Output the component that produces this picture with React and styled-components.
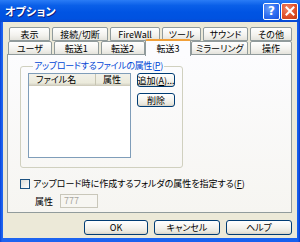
import React from "react";
import styled, { createGlobalStyle } from "styled-components";

const GlobalStyle = createGlobalStyle`
  html, body {
    margin: 0;
    padding: 0;
    background: #ffffff;
  }
  body {
    font-family: "Noto Sans CJK JP", "Noto Sans", sans-serif;
    font-size: 9px;
    font-feature-settings: "palt";
    color: #000;
  }
  * { box-sizing: border-box; }
`;

const topTabs = [
  { label: "表示", width: 41 },
  { label: "接続/切断", width: 56 },
  { label: "FireWall", width: 50 },
  { label: "ツール", width: 39 },
  { label: "サウンド", width: 45 },
  { label: "その他", width: 42 },
];

const frontTabs = [
  { label: "ユーザ", width: 44 },
  { label: "転送1", width: 45 },
  { label: "転送2", width: 44 },
  { label: "転送3", width: 47, active: true },
  { label: "ミラーリング", width: 57 },
  { label: "操作", width: 42 },
];

export default function App() {
  return (
    <>
      <GlobalStyle />
      <Window>
        <TitleBar>
          <Title>オプション</Title>
          <Caption>
            <CaptionButton>
              <HelpGlyph>?</HelpGlyph>
            </CaptionButton>
            <CaptionButton $close>
              <svg width="10" height="10" viewBox="0 0 10 10">
                <path d="M1.5 1.5 L8.5 8.5 M8.5 1.5 L1.5 8.5" stroke="#fff" strokeWidth="2" strokeLinecap="square" />
              </svg>
            </CaptionButton>
          </Caption>
        </TitleBar>

        <Body>
          <TabStrip>
            <TabRow $back>
              {topTabs.map((t) => (
                <Tab key={t.label} $width={t.width}>{t.label}</Tab>
              ))}
            </TabRow>
            <TabRow>
              {frontTabs.map((t) => (
                <Tab key={t.label} $width={t.width} $active={t.active}>{t.label}</Tab>
              ))}
            </TabRow>
          </TabStrip>

          <Panel>
            <Group>
              <Legend>アップロードするファイルの属性(<u>P</u>)</Legend>
              <GroupInner>
                <ListView>
                  <ListHeader>
                    <HeaderCell $width={67}>ファイル名</HeaderCell>
                    <HeaderCell $width={34}>属性</HeaderCell>
                  </ListHeader>
                </ListView>
                <SideButtons>
                  <Button $width={38} $height={14}>追加(<u>A</u>)...</Button>
                  <Button $width={38} $height={14}>削除</Button>
                </SideButtons>
              </GroupInner>
            </Group>

            <CheckRow>
              <CheckBox />
              <span>アップロード時に作成するフォルダの属性を指定する(<u>F</u>)</span>
            </CheckRow>

            <AttrRow>
              <span>属性</span>
              <DisabledInput>777</DisabledInput>
            </AttrRow>
          </Panel>

          <Footer>
            <Button $width={64} $height={15}>OK</Button>
            <Button $width={66} $height={15}>キャンセル</Button>
            <Button $width={66} $height={15}>ヘルプ</Button>
          </Footer>
        </Body>
      </Window>
    </>
  );
}

const Window = styled.div`
  width: 300px;
  height: 242px;
  display: flex;
  flex-direction: column;
  padding: 0 3px 4px 3px;
  background: linear-gradient(to right, #0842d8, #1e64f0 2px, #1660ee calc(100% - 2px), #0838c8);
`;

const TitleBar = styled.div`
  height: 22px;
  margin: 0 -3px;
  padding: 0 2px 0 5px;
  display: flex;
  align-items: center;
  justify-content: space-between;
  background: linear-gradient(to bottom, #2a7cf6 0%, #0a5fe8 25%, #0054e3 55%, #0052e0 85%, #0a48d0 100%);
`;

const Title = styled.div`
  color: #fff;
  font-weight: bold;
  font-size: 11px;
  text-shadow: 1px 1px 0 #0a1f80;
  letter-spacing: 0.2px;
`;

const Caption = styled.div`
  display: flex;
  gap: 1px;
`;

const CaptionButton = styled.div`
  width: 17px;
  height: 17px;
  border: 1px solid #fff;
  border-radius: 2px;
  display: flex;
  align-items: center;
  justify-content: center;
  background: ${(p) =>
    p.$close
      ? "radial-gradient(circle at 35% 30%, #f0876a, #e0502a 55%, #c23a12)"
      : "radial-gradient(circle at 35% 30%, #6a9cf8, #2d6df0 55%, #1b4fd8)"};
`;

const HelpGlyph = styled.span`
  color: #fff;
  font-family: "DejaVu Sans", sans-serif;
  font-weight: bold;
  font-size: 12px;
  line-height: 1;
`;

const Body = styled.div`
  flex: 1;
  background: #ece9d8;
  padding: 5px 5px 0 4px;
  display: flex;
  flex-direction: column;
`;

const TabStrip = styled.div`
  display: flex;
  flex-direction: column;
  position: relative;
  z-index: 1;
`;

const TabRow = styled.div`
  display: flex;
  gap: 2px;
  height: 14px;
  padding-left: ${(p) => (p.$back ? "2px" : "1px")};
  align-items: flex-end;
`;

const Tab = styled.div`
  width: ${(p) => p.$width}px;
  height: ${(p) => (p.$active ? "17px" : "14px")};
  margin: ${(p) => (p.$active ? "0 -2px -1px -2px" : "0")};
  border: 1px solid #919b9c;
  border-bottom: ${(p) => (p.$active ? "none" : "1px solid #919b9c")};
  border-top: ${(p) => (p.$active ? "2px solid #f1a039" : "1px solid #919b9c")};
  border-radius: 2px 2px 0 0;
  background: ${(p) =>
    p.$active ? "#fcfcfe" : "linear-gradient(to bottom, #ffffff, #f3f2ee 60%, #e4e3dc)"};
  display: flex;
  align-items: center;
  justify-content: center;
  white-space: nowrap;
  line-height: 1;
  position: relative;
  z-index: ${(p) => (p.$active ? 2 : 1)};
  padding-top: ${(p) => (p.$active ? "0" : "1px")};
`;

const Panel = styled.div`
  height: 159px;
  margin-top: -1px;
  border: 1px solid #919b9c;
  background: linear-gradient(to bottom, #fcfcfe, #f6f5f1);
  padding: 6px 0 0 12px;
  display: flex;
  flex-direction: column;
`;

const Group = styled.fieldset`
  width: 163px;
  height: 107px;
  margin: 0;
  padding: 0 0 0 7px;
  border: 1px solid #d0d0bf;
  border-radius: 3px;
`;

const Legend = styled.legend`
  color: #0046d5;
  padding: 0 1px;
  margin-left: 5px;
  line-height: 10px;
  white-space: nowrap;
  letter-spacing: -0.3px;
`;

const GroupInner = styled.div`
  display: flex;
  gap: 6px;
  margin-top: 2px;
`;

const ListView = styled.div`
  width: 103px;
  height: 85px;
  border: 1px solid #7f9db9;
  background: #fff;
`;

const ListHeader = styled.div`
  display: flex;
  height: 12px;
  background: linear-gradient(to bottom, #f2f1ea, #ebeadb 80%, #d6d3c6);
  border-bottom: 1px solid #d0cdbd;
`;

const HeaderCell = styled.div`
  width: ${(p) => p.$width}px;
  padding-left: 7px;
  line-height: 12px;
  border-right: 1px solid #c7c5b2;
  white-space: nowrap;
  &:last-child {
    border-right: none;
  }
`;

const SideButtons = styled.div`
  display: flex;
  flex-direction: column;
  gap: 6px;
`;

const Button = styled.div`
  width: ${(p) => p.$width}px;
  height: ${(p) => p.$height}px;
  border: 1px solid #003c74;
  border-radius: 3px;
  background: linear-gradient(to bottom, #ffffff, #f4f3ee 50%, #e8e6dc 85%, #d6d0c5);
  display: flex;
  align-items: center;
  justify-content: center;
  white-space: nowrap;
  line-height: 1;
`;

const CheckRow = styled.div`
  display: flex;
  align-items: center;
  gap: 3px;
  margin-top: 9px;
  white-space: nowrap;
`;

const CheckBox = styled.div`
  width: 10px;
  height: 10px;
  border: 1px solid #1c5180;
  background: linear-gradient(135deg, #dcdcd7, #ffffff);
`;

const AttrRow = styled.div`
  display: flex;
  align-items: center;
  gap: 7px;
  margin-top: 4px;
  padding-left: 15px;
`;

const DisabledInput = styled.div`
  width: 38px;
  height: 14px;
  border: 1px solid #c9c7ba;
  background: #f7f6f2;
  color: #a8a79f;
  padding-left: 3px;
  line-height: 12px;
`;

const Footer = styled.div`
  display: flex;
  justify-content: flex-end;
  gap: 6px;
  padding-top: 7px;
`;
